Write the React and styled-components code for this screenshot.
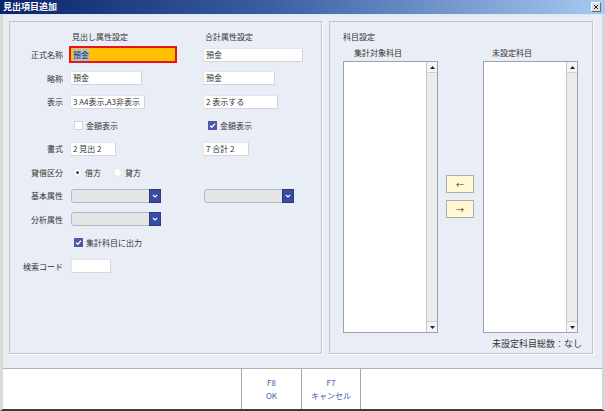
import React from 'react';
import styled, { createGlobalStyle } from 'styled-components';

const GlobalStyle = createGlobalStyle`
  html, body {
    margin: 0;
    padding: 0;
    background: #ffffff;
  }
  body {
    font-family: "Noto Sans CJK JP", "Noto Sans", sans-serif;
    color: #333;
  }
`;

const Window = styled.div`
  width: 605px;
  height: 411px;
  display: flex;
  flex-direction: column;
  box-sizing: border-box;
  overflow: hidden;
`;

const TitleBar = styled.div`
  height: 15px;
  flex: none;
  display: flex;
  align-items: center;
  justify-content: space-between;
  padding: 0 4px 1px 3px;
  box-sizing: border-box;
  background: linear-gradient(to right, #0a246a 0%, #3a5fa4 45%, #a6caf0 100%);
  border-bottom: 1px solid #dfe6ef;
`;

const TitleText = styled.span`
  color: #fff;
  font-size: 9px;
  font-weight: 700;
  line-height: 13px;
`;

const CloseButton = styled.span`
  width: 10px;
  height: 10px;
  box-sizing: border-box;
  background: #e2e0dc;
  border: 1px solid;
  border-color: #ffffff #6a6a6a #6a6a6a #ffffff;
  display: flex;
  align-items: center;
  justify-content: center;
`;

const Frame = styled.div`
  flex: 1;
  display: flex;
  flex-direction: column;
  border-left: 3px solid #dcdad5;
  border-right: 3px solid #d6d6d6;
  border-bottom: 2px solid #3c3c3c;
  min-height: 0;
`;

const Body = styled.div`
  flex: 1;
  display: flex;
  gap: 7px;
  padding: 6px 9px 14px 6px;
  background: #e9eef6;
`;

const Panel = styled.div`
  width: ${(p) => p.$w}px;
  flex: none;
  box-sizing: border-box;
  border: 1px solid #bfc5cc;
  box-shadow: 1px 1px 0 #ffffff;
  display: flex;
  flex-direction: column;
  padding: ${(p) => p.$pad};
`;

const FieldGrid = styled.div`
  display: grid;
  grid-template-columns: 60px 133px 1fr;
  grid-template-rows: 12px;
  grid-auto-rows: 23.5px;
  align-items: center;
`;

const ColHeader = styled.div`
  font-size: 8px;
  line-height: 12px;
  padding-left: ${(p) => p.$indent || 2}px;
  color: #333;
`;

const Label = styled.div`
  font-size: 8px;
  text-align: right;
  padding-right: 7px;
  color: #333;
  white-space: nowrap;
`;

const Cell = styled.div`
  display: flex;
  align-items: center;
  padding-left: ${(p) => p.$indent || 0}px;
`;

const TextBox = styled.div`
  width: ${(p) => p.$w}px;
  height: ${(p) => (p.$focused ? 17 : 14)}px;
  box-sizing: border-box;
  background: ${(p) => (p.$focused ? '#ffc000' : '#ffffff')};
  border: ${(p) => (p.$focused ? '2px solid #e8141c' : '1px solid #e3e7ec')};
  border-right-color: ${(p) => (p.$focused ? '#e8141c' : '#d2d7dd')};
  border-bottom-color: ${(p) => (p.$focused ? '#e8141c' : '#d2d7dd')};
  font-size: 8px;
  line-height: 12px;
  padding-left: 2px;
  color: #333;
  white-space: nowrap;
  overflow: hidden;
  display: flex;
  align-items: center;
  margin-left: ${(p) => (p.$focused ? -1 : 0)}px;
`;

const Selected = styled.span`
  background: #a9c1df;
  color: #2a2a2a;
`;

const Check = styled.span`
  width: 9px;
  height: 9px;
  box-sizing: border-box;
  flex: none;
  background: ${(p) => (p.$on ? '#4b57a8' : '#ffffff')};
  border: 1px solid ${(p) => (p.$on ? '#4b57a8' : '#d3d7dc')};
  display: flex;
  align-items: center;
  justify-content: center;
  margin-right: 3px;
`;

const OptionText = styled.span`
  font-size: 8px;
  color: #333;
  white-space: nowrap;
`;

const Radio = styled.span`
  width: 9px;
  height: 9px;
  box-sizing: border-box;
  border-radius: 50%;
  background: #fff;
  border: 1px solid #e1e5ea;
  display: flex;
  align-items: center;
  justify-content: center;
  margin-right: 3px;
  flex: none;

  &::after {
    content: '';
    width: 3px;
    height: 3px;
    border-radius: 50%;
    background: ${(p) => (p.$on ? '#33418f' : 'transparent')};
  }
`;

const RadioItem = styled.span`
  display: inline-flex;
  align-items: center;
  margin-right: ${(p) => p.$gap || 0}px;
`;

const Combo = styled.div`
  width: 90px;
  height: 14px;
  box-sizing: border-box;
  background: #e5e6e8;
  border: 1px solid #b5b9bf;
  border-radius: 3px 0 0 3px;
  display: flex;
  justify-content: flex-end;
  margin-left: 1px;
`;

const ComboButton = styled.span`
  width: 12px;
  height: 14px;
  margin: -1px -1px -1px 0;
  background: #3a4ca0;
  border: 1px solid #2c3a80;
  box-sizing: border-box;
  display: flex;
  align-items: center;
  justify-content: center;
`;

const SectionTitle = styled.div`
  font-size: 8px;
  line-height: 12px;
  color: #333;
`;

const ListArea = styled.div`
  flex: 1;
  display: flex;
  gap: 8px;
  min-height: 0;
`;

const ListColumn = styled.div`
  width: 95px;
  display: flex;
  flex-direction: column;
`;

const ListCaption = styled.div`
  font-size: 8px;
  line-height: 12px;
  padding-left: ${(p) => p.$indent}px;
  margin: 4px 0 2px;
  color: #333;
`;

const ListBox = styled.div`
  flex: 1;
  background: #ffffff;
  border: 1px solid #9aa4b0;
  display: flex;
  justify-content: flex-end;
`;

const ScrollBar = styled.div`
  width: 10px;
  background: #ececec;
  border-left: 1px solid #c4c8cc;
  display: flex;
  flex-direction: column;
  justify-content: space-between;
`;

const ScrollArrow = styled.span`
  height: 10px;
  background: #f4f4f4;
  border-bottom: ${(p) => (p.$down ? 'none' : '1px solid #cfcfcf')};
  border-top: ${(p) => (p.$down ? '1px solid #cfcfcf' : 'none')};
  display: flex;
  align-items: center;
  justify-content: center;
`;

const MoveColumn = styled.div`
  width: 28px;
  display: flex;
  flex-direction: column;
  justify-content: center;
  gap: 7px;
  padding: 17px 1px 0 0;
`;

const MoveButton = styled.div`
  height: 18px;
  box-sizing: border-box;
  background: #fff8d2;
  border: 1px solid #a9adb2;
  font-size: 8px;
  color: #333;
  display: flex;
  align-items: center;
  justify-content: center;
`;

const CountText = styled.div`
  font-size: 9px;
  line-height: 12px;
  text-align: right;
  margin: 5px -4px 3px 0;
  color: #333;
`;

const Footer = styled.div`
  height: 40px;
  flex: none;
  display: flex;
  padding-left: 238px;
  background: #ffffff;
  border-top: 1px solid #b0b0b0;
`;

const FKey = styled.div`
  width: 60px;
  box-sizing: border-box;
  border-left: 1px solid #a6a6a6;
  border-right: ${(p) => (p.$last ? '1px solid #a6a6a6' : 'none')};
  display: flex;
  flex-direction: column;
  align-items: center;
  justify-content: center;
  font-size: 8px;
  line-height: 13px;
  color: #3d62a8;
`;

const CheckMark = () => (
  <svg width="7" height="7" viewBox="0 0 7 7">
    <path d="M1 3.6 L2.8 5.3 L6 1.6" fill="none" stroke="#fff" strokeWidth="1.3" />
  </svg>
);

const Chevron = () => (
  <svg width="6" height="4" viewBox="0 0 6 4">
    <path d="M0.8 0.8 L3 3 L5.2 0.8" fill="none" stroke="#fff" strokeWidth="1.1" />
  </svg>
);

const Triangle = ({ down }) => (
  <svg width="5" height="3" viewBox="0 0 5 3">
    <path d={down ? 'M0 0 H5 L2.5 3 Z' : 'M0 3 H5 L2.5 0 Z'} fill="#222" />
  </svg>
);

const CloseX = () => (
  <svg width="6" height="6" viewBox="0 0 6 6">
    <path d="M1 1 L5 5 M5 1 L1 5" stroke="#222" strokeWidth="1" />
  </svg>
);

const ScrollList = () => (
  <ListBox>
    <ScrollBar>
      <ScrollArrow><Triangle /></ScrollArrow>
      <ScrollArrow $down><Triangle down /></ScrollArrow>
    </ScrollBar>
  </ListBox>
);

export default function App() {
  return (
    <Window>
      <GlobalStyle />
      <TitleBar>
        <TitleText>見出項目追加</TitleText>
        <CloseButton><CloseX /></CloseButton>
      </TitleBar>
      <Frame>
        <Body>
          <Panel $w={313} $pad="9px 0 0 0">
            <FieldGrid>
              <span />
              <ColHeader>見出し属性設定</ColHeader>
              <ColHeader>合計属性設定</ColHeader>

              <Label>正式名称</Label>
              <Cell>
                <TextBox $w={108} $focused><Selected>預金</Selected></TextBox>
              </Cell>
              <Cell><TextBox $w={100}>預金</TextBox></Cell>

              <Label>略称</Label>
              <Cell><TextBox $w={72}>預金</TextBox></Cell>
              <Cell><TextBox $w={72}>預金</TextBox></Cell>

              <Label>表示</Label>
              <Cell><TextBox $w={75}>3 A4表示,A3非表示</TextBox></Cell>
              <Cell><TextBox $w={75}>2 表示する</TextBox></Cell>

              <span />
              <Cell $indent={4}><Check /><OptionText>金額表示</OptionText></Cell>
              <Cell $indent={5}><Check $on><CheckMark /></Check><OptionText>金額表示</OptionText></Cell>

              <Label>書式</Label>
              <Cell><TextBox $w={46}>2 見出 2</TextBox></Cell>
              <Cell><TextBox $w={46}>7 合計 2</TextBox></Cell>

              <Label>貸借区分</Label>
              <Cell $indent={3}>
                <RadioItem $gap={12}><Radio $on /><OptionText>借方</OptionText></RadioItem>
                <RadioItem><Radio /><OptionText>貸方</OptionText></RadioItem>
              </Cell>
              <span />

              <Label>基本属性</Label>
              <Cell><Combo><ComboButton><Chevron /></ComboButton></Combo></Cell>
              <Cell><Combo><ComboButton><Chevron /></ComboButton></Combo></Cell>

              <Label>分析属性</Label>
              <Cell><Combo><ComboButton><Chevron /></ComboButton></Combo></Cell>
              <span />

              <span />
              <Cell $indent={4}><Check $on><CheckMark /></Check><OptionText>集計科目に出力</OptionText></Cell>
              <span />

              <Label>検索コード</Label>
              <Cell $indent={1}><TextBox $w={40} /></Cell>
              <span />
            </FieldGrid>
          </Panel>

          <Panel $w={264} $pad="9px 14px 0 13px">
            <SectionTitle>科目設定</SectionTitle>
            <ListArea>
              <ListColumn>
                <ListCaption $indent={11}>集計対象科目</ListCaption>
                <ScrollList />
              </ListColumn>
              <MoveColumn>
                <MoveButton>←</MoveButton>
                <MoveButton>→</MoveButton>
              </MoveColumn>
              <ListColumn>
                <ListCaption $indent={9}>未設定科目</ListCaption>
                <ScrollList />
              </ListColumn>
            </ListArea>
            <CountText>未設定科目総数：なし</CountText>
          </Panel>
        </Body>
        <Footer>
          <FKey>
            <span>F8</span>
            <span>OK</span>
          </FKey>
          <FKey $last>
            <span>F7</span>
            <span>キャンセル</span>
          </FKey>
        </Footer>
      </Frame>
    </Window>
  );
}
